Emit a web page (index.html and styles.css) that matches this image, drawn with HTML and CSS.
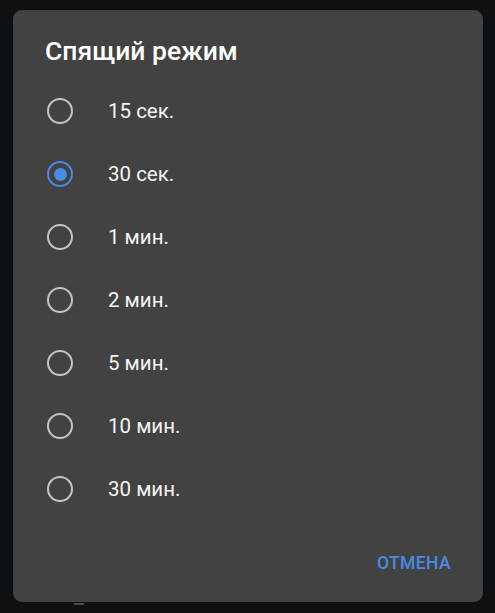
FILE: index.html
```html
<!DOCTYPE html>
<html lang="ru">
<head>
<meta charset="utf-8">
<link rel="stylesheet" href="styles.css">
</head>
<body>
<div class="dialog">
  <div class="title">Спящий режим</div>
  <div class="list">
    <div class="row"><span class="radio"></span><span class="label">15 сек.</span></div>
    <div class="row"><span class="radio checked"></span><span class="label">30 сек.</span></div>
    <div class="row"><span class="radio"></span><span class="label">1 мин.</span></div>
    <div class="row"><span class="radio"></span><span class="label">2 мин.</span></div>
    <div class="row"><span class="radio"></span><span class="label">5 мин.</span></div>
    <div class="row"><span class="radio"></span><span class="label">10 мин.</span></div>
    <div class="row"><span class="radio"></span><span class="label">30 мин.</span></div>
  </div>
  <div class="footer"><span class="btn">ОТМЕНА</span></div>
</div>
<div class="peek"></div>
</body>
</html>
```
FILE: styles.css
```css
html, body {
  margin: 0;
  padding: 0;
  background: #0d1113;
  height: 100%;
}
body {
  font-family: Roboto, "Noto Sans", sans-serif;
  position: relative;
  overflow: hidden;
}
.dialog {
  margin: 10px 0 0 13px;
  width: 470px;
  height: 592px;
  background: #424242;
  border-radius: 9px;
  box-sizing: border-box;
  display: flex;
  flex-direction: column;
}
.title {
  padding: 26px 0 0 32px;
  font-size: 26.5px;
  line-height: 30px;
  font-weight: 500;
  color: #ffffff;
}
.list {
  padding-top: 13.5px;
  display: flex;
  flex-direction: column;
}
.row {
  height: 63px;
  display: flex;
  align-items: center;
  padding-left: 34px;
}
.radio {
  width: 26px;
  height: 26px;
  box-sizing: border-box;
  border: 2.5px solid #c4c4c4;
  border-radius: 50%;
  display: flex;
  align-items: center;
  justify-content: center;
}
.radio.checked {
  border-color: #4a8be6;
}
.radio.checked::after {
  content: "";
  width: 13px;
  height: 13px;
  border-radius: 50%;
  background: #4a8be6;
}
.label {
  margin-left: 35px;
  font-size: 20.5px;
  color: #f5f5f5;
}
.footer {
  display: flex;
  justify-content: flex-end;
  padding: 31px 32px 0 0;
}
.btn {
  font-size: 17.5px;
  font-weight: 500;
  color: #4a8be6;
  line-height: 22px;
  letter-spacing: 0.4px;
}
.peek {
  position: absolute;
  left: 74px;
  top: 603px;
  width: 10px;
  height: 2px;
  background: #4a4a4a;
}
```
